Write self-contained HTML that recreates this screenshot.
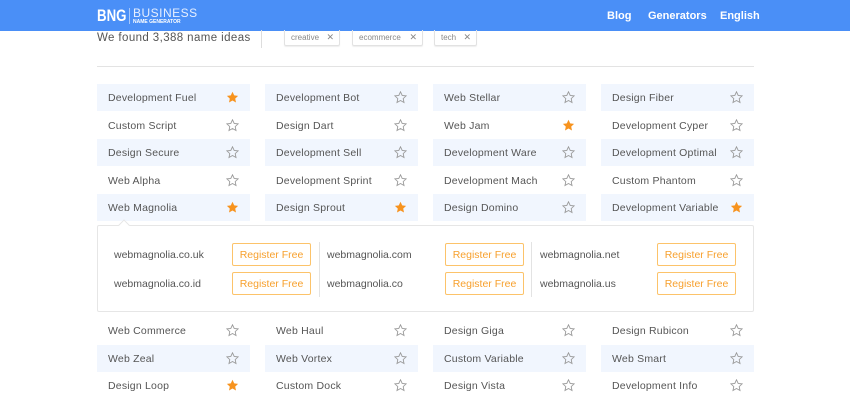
<!DOCTYPE html>
<html><head><meta charset="utf-8"><style>
*{box-sizing:border-box;margin:0;padding:0}
body{width:850px;height:400px;overflow:hidden;background:#fff;font-family:"Liberation Sans",sans-serif;position:relative;color:#555}
.hdr{position:absolute;left:0;top:0;width:850px;height:31px;background:#4a8ff7}
.logo{position:absolute;left:97px;top:6px;color:#fff;font-weight:bold;font-size:17px;letter-spacing:0;transform:scaleX(.78);transform-origin:left}
.bar{position:absolute;left:129px;top:8px;width:1px;height:16px;background:rgba(255,255,255,.5)}
.l1{position:absolute;left:133px;top:6px;color:#e6efff;font-size:12px;letter-spacing:.5px}
.l2{position:absolute;left:133px;top:19px;color:#fff;font-size:5px;font-weight:bold}
.nav{position:absolute;top:10px;color:#fff;font-weight:bold;font-size:11px}
.found{position:absolute;left:97px;top:32px;font-size:11.5px;letter-spacing:.4px;color:#555}
.vd{position:absolute;left:261px;top:30px;width:1px;height:18px;background:#ddd}
.tag{position:absolute;top:30px;height:16px;border:1px solid #e2e2e2;border-top:none;border-radius:0 0 2px 2px;font-size:8px;color:#888;line-height:15px;padding-left:6px;box-shadow:0 1px 1px #eee}
.tag b{position:absolute;right:5px;font-weight:normal;font-size:9px}
.hr{position:absolute;left:97px;top:66px;width:657px;height:1px;background:#e3e3e3}
.c{position:absolute;width:153px;height:27px;font-size:10.5px;line-height:28px;padding-left:11px;color:#555;letter-spacing:.2px}
.c.b{background:#f1f6fe}
.c svg{position:absolute;right:11px;top:7px}
.panel{position:absolute;left:97px;top:225px;width:657px;height:87px;border:1px solid #e6e6e6;border-radius:2px;background:#fff}
.arr{position:absolute;left:22px;top:-5px;width:8px;height:8px;background:#fff;border-left:1px solid #e6e6e6;border-top:1px solid #e6e6e6;transform:rotate(45deg)}
.d{position:absolute;font-size:10.5px;color:#555}
.btn{position:absolute;width:79px;height:23px;border:1px solid #fcc36a;border-radius:2px;color:#f7a02d;font-size:10.5px;text-align:center;line-height:22px}
.sep{position:absolute;top:16px;width:1px;height:55px;background:#e3e3e3}
</style></head><body>
<div class="hdr">
<div class="logo">BNG</div><div class="bar"></div>
<div class="l1">BUSINESS</div><div class="l2">NAME GENERATOR</div>
<div class="nav" style="left:607px">Blog</div>
<div class="nav" style="left:648px">Generators</div>
<div class="nav" style="left:720px">English</div>
</div>
<div class="found">We found 3,388 name ideas</div>
<div class="vd"></div>
<div class="tag" style="left:284px;width:56px">creative<b>✕</b></div>
<div class="tag" style="left:352px;width:71px">ecommerce<b>✕</b></div>
<div class="tag" style="left:434px;width:43px">tech<b>✕</b></div>
<div class="hr"></div>
<svg width="0" height="0" style="position:absolute"><defs>
<path id="st" d="M6.5 0.8l1.7 3.6 3.9.5-2.9 2.7.8 3.9-3.5-2-3.5 2 .8-3.9-2.9-2.7 3.9-.5z"/></defs></svg>
<div id="g"></div>
<div class="panel"><div class="arr"></div>
<div class="d" style="left:16px;top:23px">webmagnolia.co.uk</div>
<div class="d" style="left:16px;top:52px">webmagnolia.co.id</div>
<div class="btn" style="left:134px;top:17px">Register Free</div>
<div class="btn" style="left:134px;top:46px">Register Free</div>
<div class="sep" style="left:221px"></div>
<div class="d" style="left:229px;top:23px">webmagnolia.com</div>
<div class="d" style="left:229px;top:52px">webmagnolia.co</div>
<div class="btn" style="left:347px;top:17px">Register Free</div>
<div class="btn" style="left:347px;top:46px">Register Free</div>
<div class="sep" style="left:433px"></div>
<div class="d" style="left:442px;top:23px">webmagnolia.net</div>
<div class="d" style="left:442px;top:52px">webmagnolia.us</div>
<div class="btn" style="left:559px;top:17px">Register Free</div>
<div class="btn" style="left:559px;top:46px">Register Free</div>
</div>
<script>
var rows=[[84,1,[["Development Fuel",1],["Development Bot",0],["Web Stellar",0],["Design Fiber",0]]],
[111.5,0,[["Custom Script",0],["Design Dart",0],["Web Jam",1],["Development Cyper",0]]],
[139,1,[["Design Secure",0],["Development Sell",0],["Development Ware",0],["Development Optimal",0]]],
[166.5,0,[["Web Alpha",0],["Development Sprint",0],["Development Mach",0],["Custom Phantom",0]]],
[194,1,[["Web Magnolia",1],["Design Sprout",1],["Design Domino",0],["Development Variable",1]]],
[317,0,[["Web Commerce",0],["Web Haul",0],["Design Giga",0],["Design Rubicon",0]]],
[344.5,1,[["Web Zeal",0],["Web Vortex",0],["Custom Variable",0],["Web Smart",0]]],
[372,0,[["Design Loop",1],["Custom Dock",0],["Design Vista",0],["Development Info",0]]]];
var xs=[97,265,433,601],h='';
rows.forEach(function(r){r[2].forEach(function(c,i){
var s=c[1]?'<svg width="13" height="13" viewBox="0 0 13 13"><use href="#st" fill="#f7931e"/></svg>':'<svg width="13" height="13" viewBox="0 0 13 13"><use href="#st" fill="none" stroke="#9a9a9a" stroke-width="0.9"/></svg>';
h+='<div class="c'+(r[1]?' b':'')+'" style="left:'+xs[i]+'px;top:'+r[0]+'px">'+c[0]+s+'</div>';});});
document.getElementById('g').innerHTML=h;
</script>
</body></html>
